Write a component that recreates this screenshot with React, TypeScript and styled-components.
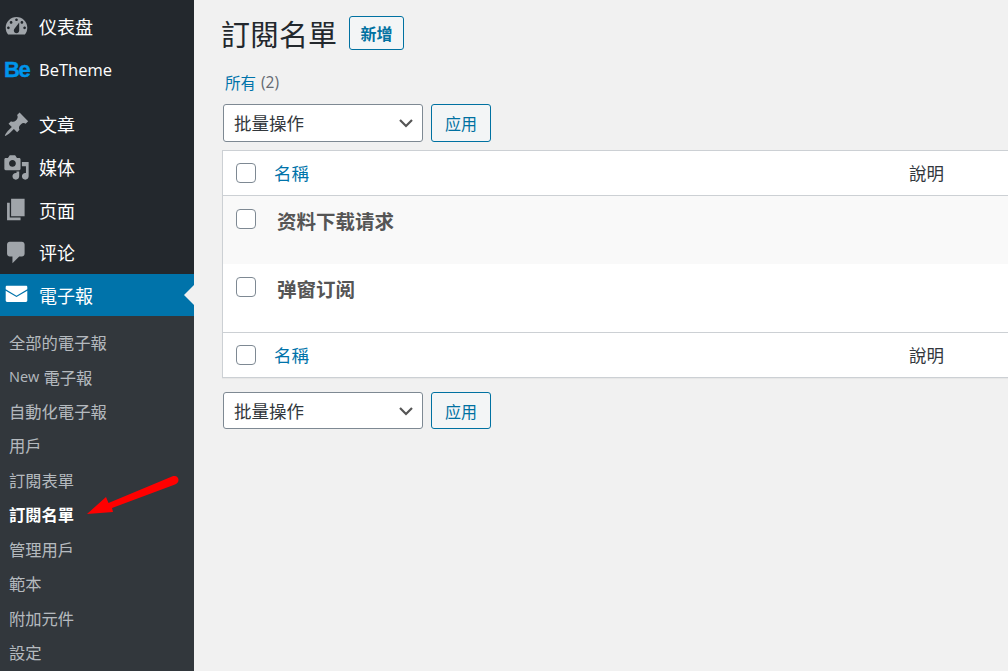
import { FunctionComponent } from "react";
import styled, { createGlobalStyle } from "styled-components";

const GlobalStyle = createGlobalStyle`
  html, body {
    margin: 0;
    padding: 0;
    height: 100%;
    overflow: hidden;
    background: #f1f1f1;
    font-family: "Open Sans", "Noto Sans CJK SC", sans-serif;
  }
  * { box-sizing: border-box; }
`;

const Page = styled.div`
  position: relative;
  display: flex;
  width: 1008px;
  height: 671px;
  overflow: hidden;
`;

const Sidebar = styled.nav`
  flex: 0 0 194px;
  display: flex;
  flex-direction: column;
  padding-top: 5px;
  background: #23282d;
`;

const MenuItem = styled.div<{ $current?: boolean; $tall?: boolean }>`
  position: relative;
  display: flex;
  align-items: center;
  flex: 0 0 ${(p) => (p.$tall ? 44 : p.$current ? 42 : 42.7)}px;
  padding-left: 39px;
  font-size: 18px;
  color: #fff;
  background: ${(p) => (p.$current ? "#0073aa" : "transparent")};

  svg {
    position: absolute;
    left: 3px;
  }

  ${(p) =>
    p.$current &&
    `&::after {
      content: "";
      position: absolute;
      right: 0;
      top: 50%;
      margin-top: -10px;
      border: 10px solid transparent;
      border-right-color: #f1f1f1;
    }`}
`;

const LatinLabel = styled.span`
  font-size: 16.5px;
`;

const BeLogo = styled.b`
  position: absolute;
  left: 4px;
  font-family: "Liberation Sans", sans-serif;
  font-size: 22px;
  font-weight: 700;
  letter-spacing: -1.5px;
  color: #0095eb;
  -webkit-text-stroke: 0.4px #0095eb;
`;

const MenuGap = styled.div`
  flex: 0 0 11.3px;
`;

const SubMenu = styled.div`
  flex: 1;
  display: flex;
  flex-direction: column;
  padding-top: 9.2px;
  background: #32373c;
`;

const SubItem = styled.div<{ $active?: boolean }>`
  flex: 0 0 34.45px;
  display: flex;
  align-items: center;
  white-space: pre;
  padding-left: 9px;
  font-size: 16.3px;
  font-weight: ${(p) => (p.$active ? 700 : 400)};
  color: ${(p) => (p.$active ? "#fff" : "rgba(240, 245, 250, 0.7)")};
`;

const SubLatin = styled.span`
  font-size: 14.5px;
`;

const Main = styled.main`
  flex: 1;
  min-width: 0;
  padding: 0 0 0 28px;
`;

const Heading = styled.div`
  display: flex;
  align-items: center;
  gap: 12px;
  height: 66px;
  margin-left: -1px;
`;

const Title = styled.h1`
  margin: 0;
  font-size: 29px;
  font-weight: 400;
  color: #23282d;
`;

const AddButton = styled.button`
  width: 55px;
  height: 34px;
  padding: 0;
  font: inherit;
  font-size: 16px;
  font-weight: 600;
  color: #0071a1;
  background: #f3f5f6;
  border: 1px solid #0071a1;
  border-radius: 3px;
`;

const Filter = styled.div`
  height: 38px;
  display: flex;
  align-items: center;
  padding: 0 0 6px 3px;
  font-size: 15.5px;
  color: #646970;

  a {
    color: #0073aa;
    margin-right: 5px;
  }
`;

const Actions = styled.div<{ $bottom?: boolean }>`
  display: flex;
  gap: 8px;
  margin: ${(p) => (p.$bottom ? "14px 0 0 1px" : "0 0 8px 1px")};
`;

const Select = styled.div<{ $short?: boolean }>`
  position: relative;
  width: 200px;
  height: ${(p) => (p.$short ? 37 : 38)}px;
  display: flex;
  align-items: center;
  padding: ${(p) => (p.$short ? "0" : "0 0 2px")} 10px;
  font-size: 17.5px;
  color: #32373c;
  background: #fff;
  border: 1px solid #7e8993;
  border-radius: 3px;

  svg {
    position: absolute;
    right: 8px;
    top: 50%;
    margin-top: -8px;
  }
`;

const ApplyButton = styled.button`
  width: 60px;
  padding: 0;
  font: inherit;
  font-size: 16px;
  color: #0071a1;
  background: #f3f5f6;
  border: 1px solid #0071a1;
  border-radius: 3px;
`;

const Table = styled.div`
  width: 860px;
  background: #fff;
  border: 1px solid #ccd0d4;
  border-right: 0;
  box-shadow: 0 1px 1px rgba(0, 0, 0, 0.04);
`;

const HeadRow = styled.div<{ $foot?: boolean }>`
  display: flex;
  align-items: center;
  height: 45px;
  border-${(p) => (p.$foot ? "top" : "bottom")}: 1px solid #ccd0d4;
  font-size: 17.5px;
`;

const Check = styled.span`
  flex: 0 0 20px;
  height: 20px;
  margin-left: 13px;
  background: #fff;
  border: 1px solid #7e8993;
  border-radius: 4px;
`;

const ColName = styled.a`
  flex: 0 0 635px;
  margin-left: 18px;
  padding-bottom: 2px;
  color: #0073aa;
`;

const ColDesc = styled.span`
  padding-bottom: 2px;
  color: #32373c;
`;

const Row = styled.div<{ $alt?: boolean }>`
  display: flex;
  height: 68px;
  padding-top: 13px;
  background: ${(p) => (p.$alt ? "#f9f9f9" : "#fff")};
`;

const RowName = styled.strong`
  margin-left: 21px;
  font-size: 19.5px;
  line-height: 26px;
  font-weight: 700;
  color: #555;
`;

const Arrow = styled.svg`
  position: absolute;
  left: 0;
  top: 0;
  pointer-events: none;
`;

const Icon: FunctionComponent<{ d: string; color?: string; size?: number }> = ({
  d,
  color = "#a0a5aa",
  size = 27,
}) => (
  <svg width={size} height={size} viewBox="0 0 20 20" fill={color}>
    <path d={d} fillRule="evenodd" />
  </svg>
);

const icons = {
  dashboard:
    "M3.76 16h12.48c1.1-1.37 1.76-3.11 1.76-5 0-4.42-3.58-8-8-8s-8 3.58-8 8c0 1.89.66 3.63 1.76 5zM10 4c.55 0 1 .45 1 1s-.45 1-1 1-1-.45-1-1 .45-1 1-1zM6 6c.55 0 1 .45 1 1s-.45 1-1 1-1-.45-1-1 .45-1 1-1zm8 0c.55 0 1 .45 1 1s-.45 1-1 1-1-.45-1-1 .45-1 1-1zm-5.37 5.55L12 7v6c0 1.1-.9 2-2 2s-2-.9-2-2c0-.57.24-1.08.63-1.45zM4 10c.55 0 1 .45 1 1s-.45 1-1 1-1-.45-1-1 .45-1 1-1zm12 0c.55 0 1 .45 1 1s-.45 1-1 1-1-.45-1-1 .45-1 1-1z",
  post: "M10.44 3.02l1.82-1.82 6.36 6.35-1.83 1.82c-1.05-.68-2.48-.57-3.41.36l-.75.75c-.92.93-1.04 2.35-.35 3.41l-1.83 1.82-2.41-2.41-2.8 2.79c-.42.42-3.38 2.71-3.8 2.29s1.86-3.39 2.28-3.81l2.79-2.79L4.1 9.36l1.83-1.82c1.05.69 2.48.57 3.41-.36l.75-.75c.93-.92 1.04-2.35.35-3.41z",
  media:
    "M13 11V4c0-.55-.45-1-1-1h-1.67L9 1H5L3.67 3H2c-.55 0-1 .45-1 1v7c0 .55.45 1 1 1h10c.55 0 1-.45 1-1zM7 4.5c1.38 0 2.5 1.12 2.5 2.5S8.38 9.5 7 9.5 4.5 8.38 4.5 7 5.62 4.5 7 4.5zM14 6h5v10.5c0 1.38-1.12 2.5-2.5 2.5S14 17.88 14 16.5s1.12-2.5 2.5-2.5c.17 0 .34.02.5.05V9h-3V6zm-4 8.05V13h2v3.5c0 1.38-1.12 2.5-2.5 2.5S7 17.88 7 16.5 8.12 14 9.5 14c.17 0 .34.02.5.05z",
  page: "M6 15V2h10v13H6zm-1 1h8v2H3V5h2v11z",
  comment:
    "M5 2h9c1.1 0 2 .9 2 2v7c0 1.1-.9 2-2 2h-2l-5 5v-5H5c-1.1 0-2-.9-2-2V4c0-1.1.9-2 2-2z",
  mail: "M3 3.500h14c.6 0 1 .4 1 1v1.700L10 10.900 2 6.200V4.500c0-.6.4-1 1-1zM2 7.200l8 4.700 8-4.700v7.300c0 .6-.4 1-1 1H3c-.6 0-1-.4-1-1z",
};

const Chevron = () => (
  <svg width="16" height="16" viewBox="0 0 16 16" fill="none">
    <path d="M2 5l6 6 6-6" stroke="#555" strokeWidth="2.2" />
  </svg>
);

const subItems = [
  "全部的電子報",
  "New",
  "自動化電子報",
  "用戶",
  "訂閱表單",
  "訂閱名單",
  "管理用戶",
  "範本",
  "附加元件",
  "設定",
];

const App = () => {
  return (
    <Page>
      <GlobalStyle />
      <Sidebar>
        <MenuItem>
          <Icon d={icons.dashboard} />
          仪表盘
        </MenuItem>
        <MenuItem $tall>
          <BeLogo>Be</BeLogo>
          <LatinLabel>BeTheme</LatinLabel>
        </MenuItem>
        <MenuGap />
        <MenuItem>
          <Icon d={icons.post} />
          文章
        </MenuItem>
        <MenuItem>
          <Icon d={icons.media} />
          媒体
        </MenuItem>
        <MenuItem>
          <Icon d={icons.page} />
          页面
        </MenuItem>
        <MenuItem>
          <Icon d={icons.comment} />
          评论
        </MenuItem>
        <MenuItem $current>
          <Icon d={icons.mail} color="#fff" />
          電子報
        </MenuItem>
        <SubMenu>
          {subItems.map((label) => (
            <SubItem key={label} $active={label === "訂閱名單"}>
              {label === "New" ? (
                <>
                  <SubLatin>New</SubLatin> 電子報
                </>
              ) : (
                label
              )}
            </SubItem>
          ))}
        </SubMenu>
      </Sidebar>
      <Main>
        <Heading>
          <Title>訂閱名單</Title>
          <AddButton>新增</AddButton>
        </Heading>
        <Filter>
          <a>所有</a> (2)
        </Filter>
        <Actions>
          <Select>
            批量操作
            <Chevron />
          </Select>
          <ApplyButton>应用</ApplyButton>
        </Actions>
        <Table>
          <HeadRow>
            <Check />
            <ColName>名稱</ColName>
            <ColDesc>說明</ColDesc>
          </HeadRow>
          <Row $alt>
            <Check />
            <RowName>资料下载请求</RowName>
          </Row>
          <Row>
            <Check />
            <RowName>弹窗订阅</RowName>
          </Row>
          <HeadRow $foot>
            <Check />
            <ColName>名稱</ColName>
            <ColDesc>說明</ColDesc>
          </HeadRow>
        </Table>
        <Actions $bottom>
          <Select $short>
            批量操作
            <Chevron />
          </Select>
          <ApplyButton>应用</ApplyButton>
        </Actions>
      </Main>
      <Arrow width="1008" height="671" viewBox="0 0 1008 671">
        <path d="M87 514L106 497L108.500 503L172 476.500C176 475 178.500 477 178.500 480C178.500 482 177 483.500 175 484.500L112 508L113 512Z" fill="#ff0000" />
      </Arrow>
    </Page>
  );
};

export default App;
